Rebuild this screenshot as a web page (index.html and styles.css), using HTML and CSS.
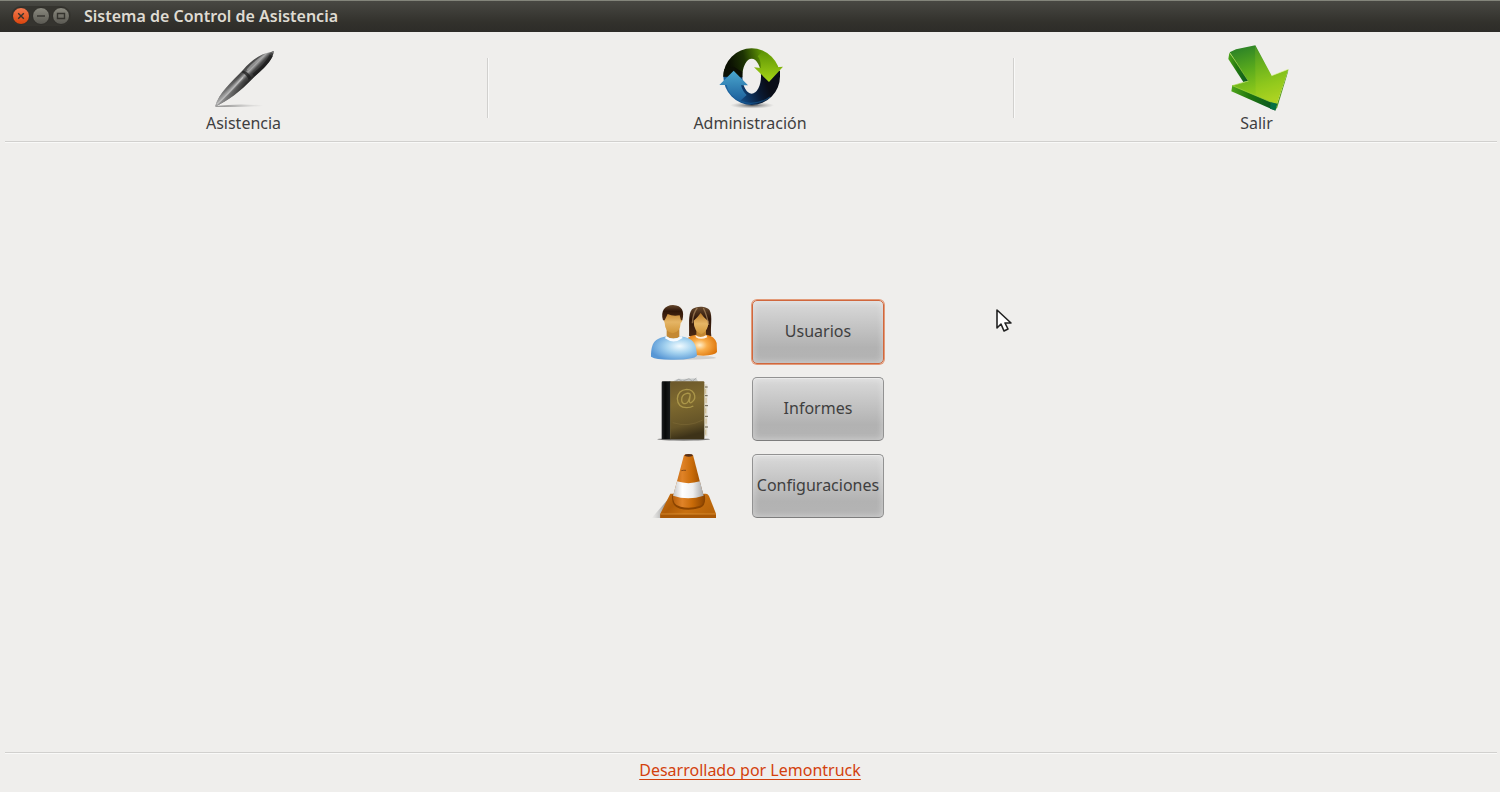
FILE: index.html
```html
<!DOCTYPE html>
<html lang="es">
<head>
<meta charset="utf-8">
<title>Sistema de Control de Asistencia</title>
<link rel="stylesheet" href="styles.css">
</head>
<body>
<div class="window">
  <header class="titlebar">
    <div class="controls">
      <button class="control close" aria-label="Cerrar"><svg viewBox="0 0 16 16"><path d="M5.2 5.2l5.6 5.6M10.8 5.2l-5.6 5.6"/></svg></button>
      <button class="control" aria-label="Minimizar"><svg viewBox="0 0 16 16"><path d="M4 8h8"/></svg></button>
      <button class="control" aria-label="Maximizar"><svg viewBox="0 0 16 16"><path d="M4.5 5.5h7v5h-7z"/></svg></button>
    </div>
    <h1 class="title">Sistema de Control de Asistencia</h1>
  </header>

  <nav class="toolbar">
    <button class="tool">
      <svg class="icon" viewBox="61 18 198 192" aria-hidden="true">
        <defs>
          <linearGradient id="pen" gradientUnits="userSpaceOnUse" x1="143" y1="99" x2="173" y2="129">
            <stop offset="0" stop-color="#3a3a3a"/><stop offset=".25" stop-color="#555"/><stop offset=".42" stop-color="#aaa"/><stop offset=".65" stop-color="#4a4a4a"/><stop offset="1" stop-color="#222"/>
          </linearGradient>
          <linearGradient id="penTip" gradientUnits="userSpaceOnUse" x1="72" y1="200" x2="150" y2="115">
            <stop offset="0" stop-color="#aaa" stop-opacity=".9"/><stop offset="1" stop-color="#888" stop-opacity="0"/>
          </linearGradient>
          <linearGradient id="penShadow"><stop offset="0" stop-color="#555"/><stop offset="1" stop-color="#999" stop-opacity="0"/></linearGradient>
        </defs>
        <path d="M76 198q70-9 146-1q-60 6-146 3z" fill="url(#penShadow)" opacity=".7"/>
        <path d="M73 200C84 160 125 123 157 90C185 58 212 40 241 36L249 33L248 41C242 67 215 86 184 118C150 154 112 182 73 200z" fill="url(#pen)"/>
        <path d="M73 200C84 160 125 123 157 90L184 118C150 154 112 182 73 200z" fill="url(#penTip)"/>
        <path d="M157 92q16 2 25 21l-8 7q-4-14-21-23z" fill="#1c1c1c" opacity=".75"/>
        <path d="M170 90Q190 65 220 47" fill="none" stroke="#aaa" stroke-width="5" opacity=".6"/>
        <path d="M188 105Q224 79 242 46" fill="none" stroke="#161616" stroke-width="10" opacity=".55"/>
        <path d="M79 193Q116 158 157 112" fill="none" stroke="#ddd" stroke-width="4" opacity=".55"/>
        <path d="M241 37l8-4-1 8z" fill="#777"/>
      </svg>
      <span>Asistencia</span>
    </button>
    <button class="tool">
      <svg class="icon" viewBox="81 18 198 192" aria-hidden="true">
        <defs>
          <linearGradient id="greenRing" gradientUnits="userSpaceOnUse" x1="120" y1="80" x2="250" y2="50">
            <stop offset="0" stop-color="#0a0f02"/><stop offset=".35" stop-color="#1d3303"/><stop offset=".7" stop-color="#558604"/><stop offset="1" stop-color="#79ad0b"/>
          </linearGradient>
          <linearGradient id="greenHead" x1="0" y1="0" x2="0" y2="1"><stop offset="0" stop-color="#5d9306"/><stop offset="1" stop-color="#a6d615"/></linearGradient>
          <linearGradient id="blueRing" gradientUnits="userSpaceOnUse" x1="115" y1="175" x2="230" y2="130">
            <stop offset="0" stop-color="#1f6aa8"/><stop offset=".4" stop-color="#0f3d70"/><stop offset=".75" stop-color="#0a1a33"/><stop offset="1" stop-color="#0a0d18"/>
          </linearGradient>
          <linearGradient id="blueHead" x1="0" y1="0" x2="0" y2="1"><stop offset="0" stop-color="#4ba8cf"/><stop offset="1" stop-color="#1d609c"/></linearGradient>
          <radialGradient id="ringShadow"><stop offset="0" stop-color="#555"/><stop offset="1" stop-color="#999" stop-opacity="0"/></radialGradient>
        </defs>
        <ellipse cx="186" cy="196" rx="66" ry="10" fill="url(#ringShadow)"/>
        <path d="M185 110m-85 0a85 85 0 0 1 170 0zm57 0h56a28 54 0 0 0-56 0z" fill="url(#greenRing)" fill-rule="evenodd"/>
        <path d="M100 109a85 86 0 0 0 170 0V92H213V109a28 52 0 0 1-56 0z" fill="url(#blueRing)"/>
        <path d="M100 110Q100 98 103 88L131 80L157 96V112z" fill="#0c1004"/>
        <path d="M192 82L212 84C213 68 210 56 203 49L218 34Q250 50 259 82L279 80L237 126z" fill="url(#greenHead)"/>
        <path d="M88 135L131 92L174 136L153 136Q158 155 170 165L150 183Q115 166 110 135z" fill="url(#blueHead)"/>
        <path d="M132 171Q152 189 183 190Q219 188 240 171" fill="none" stroke="#1c68a5" stroke-width="4" opacity=".5"/>
      </svg>
      <span>Administración</span>
    </button>
    <button class="tool">
      <svg class="icon" viewBox="70 30 198 192" aria-hidden="true">
        <defs>
          <linearGradient id="exitTop" gradientUnits="userSpaceOnUse" x1="145" y1="30" x2="200" y2="200">
            <stop offset="0" stop-color="#2f8526"/><stop offset=".35" stop-color="#57a81d"/><stop offset=".7" stop-color="#84c31b"/><stop offset="1" stop-color="#a6d022"/>
          </linearGradient>
          <linearGradient id="exitSide"><stop offset="0" stop-color="#4fa51a"/><stop offset=".4" stop-color="#20760f"/><stop offset="1" stop-color="#075027"/></linearGradient>
        </defs>
        <path d="M86 50L83 69L128 138L148 134z" fill="url(#exitSide)"/>
        <path d="M95 147L92 166L214 220L224 224L230 202z" fill="url(#exitSide)"/>
        <path d="M263 100L229 204L224 223L230 214L262 108z" fill="#579d1c"/>
        <path d="M87 49L106 40L164 28L213 119L263 100L229 203L210 198L95 149L144 135z" fill="url(#exitTop)"/>
        <path d="M163 29L213 119L263 100L229 203L165 178z" fill="#dced26" opacity=".14"/>
        <path d="M88 51L143 135L95 149L210 198L229 203" fill="none" stroke="#a5d63f" stroke-width="2"/>
        <path d="M213 119L262 100" stroke="#e3f5a0" stroke-width="2"/>
        <path d="M210 199l19 4-5 20-16-5z" fill="#067044"/>
      </svg>
      <span>Salir</span>
    </button>
  </nav>
  <hr class="rule">

  <main class="content">
    <div class="menu">
      <svg class="icon" viewBox="33 15 198 192" aria-hidden="true">
        <defs>
          <radialGradient id="blueShirt" cx=".62" cy=".42" r=".65"><stop offset="0" stop-color="#f2fbff"/><stop offset=".45" stop-color="#a7d4f0"/><stop offset="1" stop-color="#5797d5"/></radialGradient>
          <radialGradient id="orangeShirt" cx=".4" cy=".5" r=".65"><stop offset="0" stop-color="#fff0ce"/><stop offset=".4" stop-color="#f9ad4a"/><stop offset="1" stop-color="#dc7308"/></radialGradient>
          <linearGradient id="skin" x1="0" y1="0" x2="0" y2="1"><stop offset="0" stop-color="#b97a29"/><stop offset=".5" stop-color="#e5b565"/><stop offset="1" stop-color="#d19639"/></linearGradient>
          <linearGradient id="hair" x1="0" y1="0" x2="0" y2="1"><stop offset="0" stop-color="#66482d"/><stop offset=".4" stop-color="#2e1508"/><stop offset="1" stop-color="#4d2b14"/></linearGradient>
        </defs>
        <ellipse cx="134" cy="188" rx="94" ry="6" fill="#888" opacity=".3"/>
        <path d="M147 122C149 92 143 58 156 43C169 31 202 33 209 46C219 65 210 98 214 123L195 127L156 127z" fill="url(#hair)"/>
        <path d="M169 104h29v22q-14 12-29 0z" fill="#c38732"/>
        <path d="M161 77Q174 66 182 54Q191 68 205 79Q206 108 184 118Q161 109 161 77z" fill="url(#skin)"/>
        <path d="M172 39Q159 53 157 85M190 39Q200 58 206 90" fill="none" stroke="#b08d62" stroke-width="4" opacity=".7"/>
        <path d="M144 128Q153 120 168 119Q182 132 199 119Q224 123 230 144L231 171Q225 181 190 182L160 180z" fill="url(#orangeShirt)"/>
        <path d="M166 120Q181 132 199 120L202 127Q182 136 168 127z" fill="#fff3e5"/>
        <path d="M80 96h38v31q-19 12-38 0z" fill="#c48934"/>
        <path d="M71 75Q70 48 97 47Q127 49 127 76Q126 82 122 84Q121 111 98 115Q75 112 74 84z" fill="url(#skin)"/>
        <path d="M69 76C61 48 74 31 99 30C127 31 134 50 127 76L123 76L119 61Q98 65 83 57L74 76z" fill="url(#hair)"/>
        <path d="M33 185C34 143 43 131 80 124Q99 139 122 124C159 130 169 143 171 182Q163 193 103 194Q46 195 33 185z" fill="url(#blueShirt)"/>
        <path d="M78 123Q99 138 124 123L128 129Q101 149 75 130z" fill="#f6faff"/>
      </svg>
      <button class="action focused">Usuarios</button>

      <svg class="icon" viewBox="33 21 198 192" aria-hidden="true">
        <defs>
          <linearGradient id="cover" x1="0" y1="0" x2=".15" y2="1"><stop offset="0" stop-color="#6b572b"/><stop offset=".4" stop-color="#7f6a2f"/><stop offset=".8" stop-color="#665528"/><stop offset="1" stop-color="#3d3218"/></linearGradient>
          <linearGradient id="spine"><stop offset="0" stop-color="#1e2022"/><stop offset=".4" stop-color="#070909"/><stop offset="1" stop-color="#191c1d"/></linearGradient>
        </defs>
        <ellipse cx="131" cy="208" rx="79" ry="4" fill="#333" opacity=".6"/>
        <path d="M98 37Q107 24 126 27L169 25L176 38z" fill="#c8cbcb"/>
        <path d="M106 35l10-7 11 6 20-8 10 8 12-10" fill="none" stroke="#999" stroke-width="2"/>
        <path d="M188 43h14v156h-14z" fill="#e3dfcf"/>
        <path d="M195 51h8M195 77h8M195 107h9M195 139h9M195 171h9" stroke="#645d4b" stroke-width="3"/>
        <path d="M196 57v14M198 84v15M197 115v15M198 146v15M197 179v15" stroke="#c4aa77" stroke-width="2"/>
        <rect x="88" y="34" width="105" height="174" rx="3" fill="url(#cover)"/>
        <path d="M68 34h23v174H65V38q0-4 3-4z" fill="url(#spine)"/>
        <path d="M92 38v168" stroke="#9b8549" stroke-width="2" opacity=".6"/>
        <path d="M98 158Q146 173 188 150" fill="none" stroke="#988047" stroke-width="2" opacity=".4"/>
        <path d="M151 73Q145 68 138 71Q125 75 125 89Q125 101 136 101Q146 100 151 73L148 93Q149 102 156 96Q166 89 164 77Q160 58 140 58Q114 60 112 86Q113 112 140 113Q152 113 160 108" fill="none" stroke="#ab9649" stroke-width="4"/>
      </svg>
      <button class="action">Informes</button>

      <svg class="icon" viewBox="33 24 198 192" aria-hidden="true">
        <defs>
          <linearGradient id="coneBody"><stop offset="0" stop-color="#b8600c"/><stop offset=".3" stop-color="#e08328"/><stop offset=".62" stop-color="#c96b08"/><stop offset="1" stop-color="#8f4600"/></linearGradient>
          <linearGradient id="coneBase" x1="0" y1="0" x2="1" y2=".4"><stop offset="0" stop-color="#cf7512"/><stop offset=".35" stop-color="#b05c07"/><stop offset=".65" stop-color="#c87010"/><stop offset="1" stop-color="#b9650a"/></linearGradient>
          <linearGradient id="band"><stop offset="0" stop-color="#c4c4c4"/><stop offset=".3" stop-color="#fff"/><stop offset=".65" stop-color="#eee"/><stop offset="1" stop-color="#a5a5a5"/></linearGradient>
          <linearGradient id="coneShadow"><stop offset="0" stop-color="#aaa" stop-opacity="0"/><stop offset="1" stop-color="#777"/></linearGradient>
        </defs>
        <path d="M35 216L88 155L82 216z" fill="url(#coneShadow)"/>
        <path d="M91 143L198 143Q203 143 207 150L228 203V216H61V203z" fill="url(#coneBase)"/>
        <path d="M61 205H228V216H61z" fill="#a95806"/>
        <path d="M62 204H228" stroke="#e39a3c" stroke-width="2"/>
        <path d="M97 146Q92 181 120 188Q149 196 181 185Q200 177 194 146z" fill="#8b4400"/>
        <path d="M99 146Q96 177 122 182Q149 189 178 180Q197 173 191 146z" fill="url(#coneBody)"/>
        <path d="M132 27Q145 22 159 27L191 151Q145 167 99 151z" fill="url(#coneBody)"/>
        <path d="M111 106Q145 117 180 106L191 149Q145 164 99 149z" fill="url(#band)"/>
        <ellipse cx="146" cy="28" rx="12" ry="4" fill="#55301a"/>
        <path d="M124 74q8-2 14-1" fill="none" stroke="#864a16" stroke-width="3"/>
      </svg>
      <button class="action">Configuraciones</button>
    </div>
  </main>

  <hr class="rule">
  <footer class="footer"><a href="#">Desarrollado por Lemontruck</a></footer>

  <svg class="pointer" viewBox="0 0 16 24" aria-hidden="true"><path d="M1 1v18l4-4 3 7 4-2-3-6h6z" fill="#fff" stroke="#222" stroke-width="1.6" stroke-linejoin="round"/></svg>
</div>
</body>
</html>
```
FILE: styles.css
```css
* { box-sizing: border-box; }

body {
  margin: 0;
  background: #efeeec;
  color: #3f3f3f;
  font: 16px/20px "Noto Sans", "Open Sans", sans-serif;
}

button {
  margin: 0;
  padding: 0;
  border: 0;
  background: none;
  color: inherit;
  font: inherit;
}

.window {
  position: relative;
  display: flex;
  flex-direction: column;
  min-height: 100vh;
}

.titlebar {
  display: flex;
  align-items: center;
  gap: 13px;
  height: 32px;
  padding: 0 11px;
  background: linear-gradient(#494944, #32312c 70%, #2d2c28);
  box-shadow: inset 0 1px #83857b;
}

.controls {
  display: flex;
  gap: 2px;
  padding: 1px;
  border-radius: 10px;
  background: #35342f;
}

.control {
  width: 18px;
  height: 18px;
  border: 1px solid #302f2b;
  border-radius: 50%;
  background: linear-gradient(#8a897f, #5a5952);
}

.control.close { background: linear-gradient(#f37a50, #da450d); }

.control svg {
  display: block;
  width: 16px;
  height: 16px;
  fill: none;
  stroke: #34332e;
  stroke-width: 1.4;
}

.title {
  margin: 0;
  color: #dfdbd2;
  font-size: 16px;
  font-weight: 600;
}

.toolbar {
  display: grid;
  grid-template-columns: 487fr 526fr 487fr;
  padding: 14px 0 8px;
}

.tool {
  position: relative;
  display: flex;
  flex-direction: column;
  align-items: center;
  gap: 3px;
}

.tool + .tool::before {
  content: "";
  position: absolute;
  top: 12px;
  left: 0;
  height: 60px;
  border-left: 1px solid #d1d0ce;
  box-shadow: 1px 0 #f9f9f8;
}

.rule {
  width: auto;
  height: 2px;
  margin: 0 3px 0 5px;
  border: 0;
  border-top: 1px solid #d1d0ce;
  background: #f9f9f8;
}

.icon {
  display: block;
  width: 66px;
  height: 64px;
  overflow: visible;
}

.content {
  display: flex;
  flex: 1;
  justify-content: center;
  padding: 157px 0 32px 35px;
}

.menu {
  display: grid;
  grid-template-columns: 66px 132px;
  grid-auto-rows: 64px;
  align-content: start;
  gap: 13px 35px;
}

.action {
  padding-bottom: 2px;
  border: 1px solid #929292;
  border-bottom-color: #7d7d7d;
  border-radius: 5px;
  background: linear-gradient(#dadada, #b2b2b2 75%, #b4b4b4);
  box-shadow: inset 0 0 6px 1px rgba(255, 255, 255, .35), inset 0 1px #e5e5e5;
}

.action.focused {
  border-color: #d0673d;
  box-shadow: inset 0 0 6px 1px rgba(255, 255, 255, .35), 0 0 0 1px #e39a78;
}

.footer {
  height: 38px;
  padding-top: 6px;
  text-align: center;
}

.footer a {
  color: #d3410d;
  text-underline-offset: 3px;
  text-decoration-skip-ink: none;
}

.pointer {
  position: absolute;
  top: 309px;
  left: 66.4%;
  width: 16px;
  height: 24px;
}
```
